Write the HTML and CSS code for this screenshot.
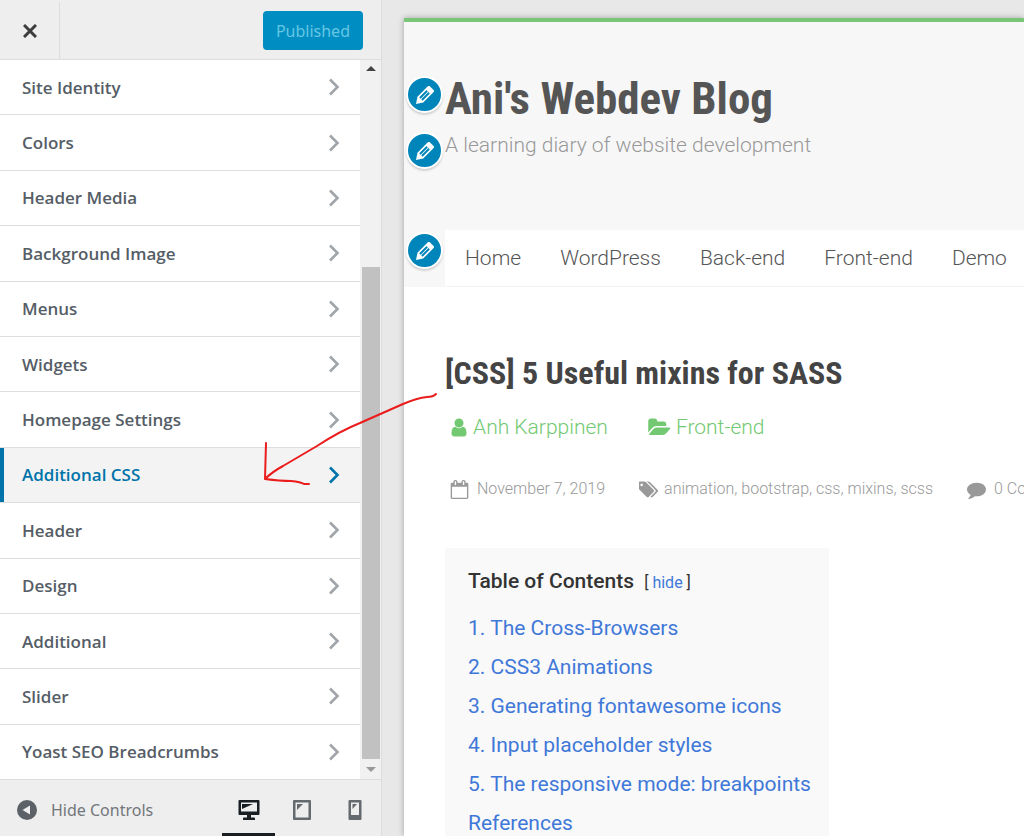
FILE: index.html
```html
<!DOCTYPE html>
<html lang="en">
<head>
  <meta charset="UTF-8" />
  <meta name="viewport" content="width=device-width, initial-scale=1.0"/>
  <title>Customize: Ani's Webdev Blog</title>
  <link rel="stylesheet" href="styles.css">
</head>
<body>
  <!-- shared icons -->
  <svg class="sprite" aria-hidden="true">
    <symbol id="chevron" viewBox="0 0 12 18">
      <path d="M2 1.500l7.500 7.500L2 16.500" fill="none" stroke="currentColor" stroke-width="2.600"/>
    </symbol>
    <symbol id="pencil" viewBox="0 0 20 20">
      <path fill="currentColor" d="M13.890 3.390l2.710 2.720c.46.46.42 1.240.03 1.640l-8.010 8.020-5.560 1.160 1.160-5.580s7.600-7.630 7.990-8.030c.39-.39 1.220-.39 1.680.07zm-2.730 2.790l-5.590 5.610 1.110 1.110 5.540-5.650zm-2.970 8.230l5.580-5.600-1.070-1.080-5.590 5.600z"/>
    </symbol>
  </svg>

  <div class="customizer">
    <aside class="sidebar">
      <header class="sidebar-header">
        <button class="close" aria-label="Close">
          <svg viewBox="0 0 14 14" width="14" height="14"><path d="M1 1l12 12M13 1L1 13" stroke="currentColor" stroke-width="3"/></svg>
        </button>
        <button class="publish">Published</button>
      </header>

      <div class="sidebar-body">
        <ul class="sections">
          <li><button>Site Identity<svg class="chevron"><use href="#chevron"/></svg></button></li>
          <li><button>Colors<svg class="chevron"><use href="#chevron"/></svg></button></li>
          <li><button>Header Media<svg class="chevron"><use href="#chevron"/></svg></button></li>
          <li><button>Background Image<svg class="chevron"><use href="#chevron"/></svg></button></li>
          <li><button>Menus<svg class="chevron"><use href="#chevron"/></svg></button></li>
          <li><button>Widgets<svg class="chevron"><use href="#chevron"/></svg></button></li>
          <li><button>Homepage Settings<svg class="chevron"><use href="#chevron"/></svg></button></li>
          <li class="active"><button>Additional CSS<svg class="chevron"><use href="#chevron"/></svg></button></li>
          <li><button>Header<svg class="chevron"><use href="#chevron"/></svg></button></li>
          <li><button>Design<svg class="chevron"><use href="#chevron"/></svg></button></li>
          <li><button>Additional<svg class="chevron"><use href="#chevron"/></svg></button></li>
          <li><button>Slider<svg class="chevron"><use href="#chevron"/></svg></button></li>
          <li><button>Yoast SEO Breadcrumbs<svg class="chevron"><use href="#chevron"/></svg></button></li>
        </ul>
        <div class="scrollbar">
          <span class="scroll-up"></span>
          <span class="scroll-thumb"></span>
          <span class="scroll-down"></span>
        </div>
      </div>

      <footer class="sidebar-footer">
        <button class="collapse">
          <svg viewBox="0 0 20 20" width="20" height="20"><circle cx="10" cy="10" r="10" fill="currentColor"/><path d="M13 5.500v9L5.500 10z" fill="#eee"/></svg>
          Hide Controls
        </button>
        <div class="devices">
          <button class="device current" aria-label="Desktop">
            <svg viewBox="0 0 22 20" width="22" height="20"><path fill="currentColor" fill-rule="evenodd" d="M1.500 0h19q1 0 1 1v13q0 1-1 1H13v2.500h3q1 0 1 1V20H5v-1.500q0-1 1-1h3V15H1.500q-1 0-1-1V1q0-1 1-1zM3 2.500v9h16v-9z"/><path fill="currentColor" d="M4 4h11L4 9z"/></svg>
          </button>
          <button class="device" aria-label="Tablet">
            <svg viewBox="0 0 18 20" width="18" height="20"><path fill="currentColor" fill-rule="evenodd" d="M1 0h16q1 0 1 1v18q0 1-1 1H1q-1 0-1-1V1q0-1 1-1zM2.500 2.500v15h13v-15z"/><path fill="currentColor" d="M4 4h6L4 10z"/></svg>
          </button>
          <button class="device" aria-label="Mobile">
            <svg viewBox="0 0 14 20" width="14" height="20"><path fill="currentColor" fill-rule="evenodd" d="M1.500 0h11q1 0 1 1v18q0 1-1 1h-11q-1 0-1-1V1q0-1 1-1zM3 2.500v12.500h8V2.500z"/><path fill="currentColor" d="M4.500 4h4.500l-4.500 5z"/></svg>
          </button>
        </div>
      </footer>
    </aside>

    <main class="preview">
      <div class="site">
        <header class="site-header">
          <div class="editable site-title">
            <button class="edit" aria-label="Edit title"><svg><use href="#pencil"/></svg></button>
            <h1>Ani's Webdev Blog</h1>
          </div>
          <div class="editable tagline">
            <button class="edit" aria-label="Edit tagline"><svg><use href="#pencil"/></svg></button>
            <p>A learning diary of website development</p>
          </div>
          <nav class="editable menu">
            <button class="edit" aria-label="Edit menu"><svg><use href="#pencil"/></svg></button>
            <a href="#">Home</a>
            <a href="#">WordPress</a>
            <a href="#">Back-end</a>
            <a href="#">Front-end</a>
            <a href="#">Demo</a>
          </nav>
        </header>

        <article class="post">
          <h2>[CSS] 5 Useful mixins for SASS</h2>
          <div class="byline">
            <a href="#">
              <svg viewBox="128 0 1536 1792" width="18" height="21"><path fill="currentColor" d="M1536 1399q0 109-62.500 187t-150.500 78h-854q-88 0-150.500-78t-62.500-187q0-85 8.500-160.500t31.500-152 58.500-131 94-89 134.500-34.500q131 128 313 128t313-128q76 0 134.500 34.500t94 89 58.500 131 31.500 152 8.500 160.500zm-256-887q0 159-112.500 271.500t-271.500 112.500-271.500-112.500-112.500-271.500 112.500-271.500 271.500-112.500 271.500 112.500 112.500 271.500z"/></svg>
              Anh Karppinen
            </a>
            <a href="#">
              <svg viewBox="0 0 1920 1792" width="23" height="21"><path fill="currentColor" d="M1879 952q0 31-31 66l-336 396q-43 51-120.500 86.500t-143.500 35.500h-1088q-34 0-60.500-13t-26.500-43q0-31 31-66l336-396q43-51 120.500-86.500t143.500-35.500h1088q34 0 60.500 13t26.500 43zm-343-344v160h-832q-94 0-197 47.500t-164 119.500l-337 396-5 6q0-4-.5-12.500t-.5-12.500v-960q0-92 66-158t158-66h320q92 0 158 66t66 158v32h544q92 0 158 66t66 158z"/></svg>
              Front-end
            </a>
          </div>
          <div class="meta">
            <span class="date">
              <svg viewBox="0 0 1792 1792" width="19" height="19"><path fill="currentColor" d="M192 1664h1408v-1024h-1408v1024zm384-1216v-288q0-14-9-23t-23-9h-64q-14 0-23 9t-9 23v288q0 14 9 23t23 9h64q14 0 23-9t9-23zm768 0v-288q0-14-9-23t-23-9h-64q-14 0-23 9t-9 23v288q0 14 9 23t23 9h64q14 0 23-9t9-23zm384-64v1280q0 52-38 90t-90 38h-1408q-52 0-90-38t-38-90v-1280q0-52 38-90t90-38h128v-96q0-66 47-113t113-47h64q66 0 113 47t47 113v96h384v-96q0-66 47-113t113-47h64q66 0 113 47t47 113v96h128q52 0 90 38t38 90z"/></svg>
              November 7, 2019
            </span>
            <span class="tags">
              <svg viewBox="0 0 1920 1792" width="20" height="19"><path fill="currentColor" d="M384 448q0-53-37.500-90.500t-90.500-37.500-90.500 37.500-37.500 90.500 37.500 90.500 90.500 37.500 90.500-37.500 37.500-90.500zm1067 576q0 53-37 90l-491 492q-39 37-91 37-53 0-90-37l-715-716q-38-37-64.500-101t-26.500-117v-416q0-52 38-90t90-38h416q53 0 117 26.500t102 64.500l715 714q37 39 37 91zm384 0q0 53-37 90l-491 492q-39 37-91 37-36 0-59-14t-53-45l470-470q37-37 37-90 0-52-37-91l-715-714q-38-38-102-64.500t-117-26.500h224q53 0 117 26.500t102 64.500l715 714q37 39 37 91z"/></svg>
              <span><a href="#">animation</a>, <a href="#">bootstrap</a>, <a href="#">css</a>, <a href="#">mixins</a>, <a href="#">scss</a></span>
            </span>
            <a class="comments" href="#">
              <svg viewBox="0 0 1792 1792" width="19" height="19"><path fill="currentColor" d="M1792 896q0 174-120 321.500t-326 233-450 85.500q-70 0-145-8-198 175-460 242-49 14-114 22-17 2-30.500-9t-17.500-29v-1q-3-4-.5-12t2-10 4.500-9.500l6-9 7-8.500 8-9q7-8 31-34.500t34.500-38 31-39.500 32.500-51 27-59 26-76q-157-89-247.500-220t-90.500-281q0-130 71-248.500t191-204.500 286-136.500 348-50.500q244 0 450 85.500t326 233 120 321.500z"/></svg>
              0 Comments
            </a>
          </div>

          <div class="toc">
            <p class="toc-title"><strong>Table of Contents</strong> <span>[ <a href="#">hide</a> ]</span></p>
            <ul>
              <li><a href="#">1. The Cross-Browsers</a></li>
              <li><a href="#">2. CSS3 Animations</a></li>
              <li><a href="#">3. Generating fontawesome icons</a></li>
              <li><a href="#">4. Input placeholder styles</a></li>
              <li><a href="#">5. The responsive mode: breakpoints</a></li>
              <li><a href="#">References</a></li>
            </ul>
          </div>
        </article>
      </div>
    </main>

    <!-- hand-drawn arrow to Additional CSS -->
    <svg class="arrow" viewBox="0 0 180 100" width="180" height="100" aria-hidden="true">
      <path d="M176 4q-3 3-9 3-10 1-24 7L100 33Q80 41 57 56L23 76Q12 82 5 89M6 53L5 89q15 2 26 2 10 1 13 3l5 0"/>
    </svg>
  </div>
</body>
</html>
```
FILE: styles.css
```css
* {
  box-sizing: border-box;
}

body {
  margin: 0;
  font-family: Roboto, sans-serif;
  background: #e8e8e8;
}

h1, h2, p, ul {
  margin: 0;
  padding: 0;
}

ul {
  list-style: none;
}

a {
  color: inherit;
  text-decoration: none;
}

button {
  border: none;
  background: none;
  padding: 0;
  font: inherit;
  color: inherit;
  cursor: pointer;
}

svg {
  flex: none;
}

.sprite {
  position: absolute;
  width: 0;
  height: 0;
}

.customizer {
  position: relative;
  display: flex;
  height: 100vh;
  overflow: hidden;
}

/* sidebar */
.sidebar {
  flex: none;
  display: flex;
  flex-direction: column;
  width: 382px;
  background: #eee;
  border-right: 1px solid #ddd;
  font-family: "Open Sans", "Noto Sans", sans-serif;
  color: #555d66;
}

.sidebar-header {
  display: flex;
  align-items: center;
  justify-content: space-between;
  height: 60px;
  padding: 2px 18px 0 0;
  border-bottom: 1px solid #ddd;
}

.close {
  display: flex;
  align-items: center;
  justify-content: center;
  width: 60px;
  height: 100%;
  border-right: 1px solid #ddd;
  color: #3c3c3c;
}

.publish {
  height: 39px;
  padding: 0 13px;
  border-radius: 4px;
  background: #008ec2;
  color: #66c6e4;
  font-family: "Noto Sans", sans-serif;
  font-size: 16px;
}

.sidebar-body {
  flex: 1;
  display: flex;
  min-height: 0;
}

.sections {
  flex: 1;
  display: flex;
  flex-direction: column;
  background: #fff;
}

.sections li {
  flex: 1;
  border-bottom: 1px solid #ddd;
}

.sections li:last-child {
  border-bottom: none;
}

.sections button {
  display: flex;
  align-items: center;
  justify-content: space-between;
  width: 100%;
  height: 100%;
  padding: 0 20px 0 18px;
  border-left: 4px solid transparent;
  font-size: 17px;
  font-weight: 600;
}

.sections .active button {
  background: #f3f3f3;
  border-left-color: #0073aa;
  color: #0073aa;
}

.chevron {
  width: 12px;
  height: 18px;
  color: #a0a5aa;
}

.active .chevron {
  color: #0073aa;
}

.scrollbar {
  display: flex;
  flex-direction: column;
  justify-content: flex-end;
  align-items: center;
  width: 21px;
  background: #f1f1f1;
}

.scroll-up {
  margin: 6px 0 auto;
  border: 5px solid transparent;
  border-top: none;
  border-bottom-color: #444;
}

.scroll-thumb {
  width: 18px;
  height: 492px;
  background: #c1c1c1;
}

.scroll-down {
  margin: 8px 0 7px;
  border: 5px solid transparent;
  border-bottom: none;
  border-top-color: #999;
}

.sidebar-footer {
  display: flex;
  justify-content: space-between;
  height: 57px;
  padding: 0 0 0 17px;
  border-top: 1px solid #ddd;
}

.collapse {
  display: flex;
  align-items: center;
  gap: 14px;
  padding-top: 3px;
  color: #72777c;
  font-family: "Noto Sans", sans-serif;
  font-size: 16px;
}

.collapse svg {
  color: #5c6167;
}

.devices {
  display: flex;
}

.device {
  display: flex;
  align-items: center;
  justify-content: center;
  width: 53px;
  padding-top: 6px;
  border-bottom: 3px solid transparent;
  color: #656a6f;
}

.device.current {
  border-bottom-color: #191e23;
  color: #191e23;
}

/* preview */
.preview {
  flex: 1;
  min-width: 0;
  padding: 18px 0 0 22px;
}

.site {
  height: 100%;
  overflow: hidden;
  border-top: 4px solid #7ac678;
  background: #fff;
  box-shadow: 0 0 6px rgba(0, 0, 0, 0.3);
}

.site-header {
  padding: 48px 0 0 41px;
  background: #f7f7f7;
}

.editable {
  position: relative;
}

.edit {
  position: absolute;
  top: 6px;
  left: -39px;
  display: flex;
  align-items: center;
  justify-content: center;
  width: 37px;
  height: 37px;
  border: 2px solid #fff;
  border-radius: 50%;
  background: #0085ba;
  box-shadow: 0 2px 2px rgba(0, 0, 0, 0.15);
  color: #fff;
}

.menu .edit {
  top: 2px;
}

.edit svg {
  width: 26px;
  height: 26px;
}

.site-title {
  line-height: 58px;
  color: #555;
}

.site-title h1 {
  font-family: "Roboto Condensed", Roboto, sans-serif;
  font-size: 45px;
  font-weight: 700;
}

.tagline {
  margin-bottom: 68px;
  font-size: 21px;
  font-weight: 300;
  line-height: 34px;
  color: #999;
}

.tagline .edit {
  top: 4px;
}

.menu {
  display: flex;
  gap: 39px;
  padding-left: 20px;
  background: #fff;
  border-bottom: 1px solid #f3f3f3;
  font-size: 21px;
  font-weight: 300;
  line-height: 56px;
  white-space: nowrap;
  color: #555;
}

.post {
  padding: 62px 0 0 41px;
  white-space: nowrap;
}

.post h2 {
  font-family: "Roboto Condensed", Roboto, sans-serif;
  font-size: 32px;
  font-weight: 700;
  line-height: 48px;
  color: #444;
}

.byline {
  display: flex;
  gap: 40px;
  padding: 14px 0 0 5px;
  font-size: 21px;
  font-weight: 300;
  line-height: 32px;
  color: #72c972;
}

.byline a {
  display: flex;
  align-items: center;
  gap: 5px;
}

.meta {
  display: flex;
  gap: 34px;
  padding: 32px 0 0 5px;
  font-size: 16px;
  font-weight: 300;
  line-height: 28px;
  color: #999;
}

.meta > * {
  display: flex;
  align-items: center;
  gap: 8px;
}

.meta .tags {
  gap: 5px;
}

.toc {
  width: 384px;
  margin-top: 45px;
  padding: 14px 18px 14px 23px;
  background: #f9f9f9;
  font-size: 21px;
  line-height: 39px;
  color: #333;
}

.toc-title {
  margin-bottom: 7px;
}

.toc-title strong {
  font-weight: 500;
}

.toc-title span {
  margin-left: 5px;
  font-size: 16px;
}

.toc a {
  color: #3f78d8;
}

.arrow {
  position: absolute;
  top: 390px;
  left: 260px;
  pointer-events: none;
}

.arrow path {
  fill: none;
  stroke: #ea1c1c;
  stroke-width: 2;
  stroke-linecap: round;
  stroke-linejoin: round;
}
```
